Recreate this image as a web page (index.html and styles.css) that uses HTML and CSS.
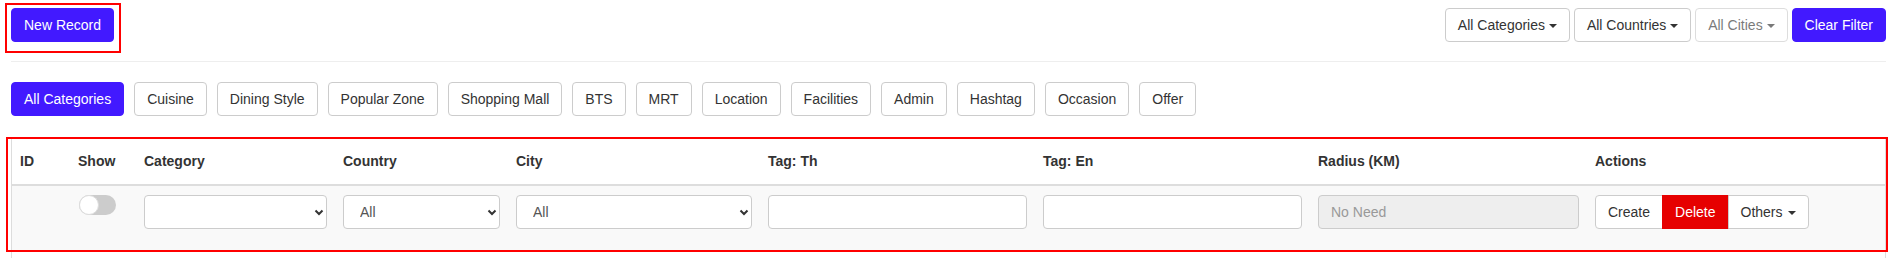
FILE: index.html
```html
<!DOCTYPE html>
<html lang="en">
<head>
  <meta charset="UTF-8">
  <meta name="viewport" content="width=device-width, initial-scale=1.0">
  <title>Tags</title>
  <link rel="stylesheet" href="styles.css">
</head>
<body>
  <div class="page">
    <div class="toolbar">
      <div class="marked">
        <button class="btn btn-primary">New Record</button>
        <div class="mark mark-new"></div>
      </div>

      <div class="filters">
        <button class="btn btn-default">All Categories <span class="caret"></span></button>
        <button class="btn btn-default">All Countries <span class="caret"></span></button>
        <button class="btn btn-default" disabled>All Cities <span class="caret"></span></button>
        <button class="btn btn-primary">Clear Filter</button>
      </div>
    </div>

    <hr class="divider">

    <div class="pills">
      <button class="btn btn-primary">All Categories</button>
      <button class="btn btn-default">Cuisine</button>
      <button class="btn btn-default">Dining Style</button>
      <button class="btn btn-default">Popular Zone</button>
      <button class="btn btn-default">Shopping Mall</button>
      <button class="btn btn-default">BTS</button>
      <button class="btn btn-default">MRT</button>
      <button class="btn btn-default">Location</button>
      <button class="btn btn-default">Facilities</button>
      <button class="btn btn-default">Admin</button>
      <button class="btn btn-default">Hashtag</button>
      <button class="btn btn-default">Occasion</button>
      <button class="btn btn-default">Offer</button>
    </div>

    <div class="table-wrap">
      <table class="table">
        <colgroup>
          <col class="col-id">
          <col class="col-show">
          <col class="col-category">
          <col class="col-country">
          <col class="col-city">
          <col class="col-tag">
          <col class="col-tag">
          <col class="col-radius">
          <col>
        </colgroup>
        <thead>
          <tr>
            <th>ID</th>
            <th>Show</th>
            <th>Category</th>
            <th>Country</th>
            <th>City</th>
            <th>Tag: Th</th>
            <th>Tag: En</th>
            <th>Radius (KM)</th>
            <th>Actions</th>
          </tr>
        </thead>
        <tbody>
          <tr>
            <td></td>
            <td>
              <span class="switch"><span class="knob"></span></span>
            </td>
            <td>
              <div class="select-wrap">
                <select class="form-control"><option></option></select>
                <svg class="chevron" width="10" height="7" viewBox="0 0 10 7"><path d="M1.5 1.5 L5 5 L8.5 1.5" fill="none" stroke="#333" stroke-width="2"/></svg>
              </div>
            </td>
            <td>
              <div class="select-wrap">
                <select class="form-control"><option>All</option></select>
                <svg class="chevron" width="10" height="7" viewBox="0 0 10 7"><path d="M1.5 1.5 L5 5 L8.5 1.5" fill="none" stroke="#333" stroke-width="2"/></svg>
              </div>
            </td>
            <td>
              <div class="select-wrap">
                <select class="form-control"><option>All</option></select>
                <svg class="chevron" width="10" height="7" viewBox="0 0 10 7"><path d="M1.5 1.5 L5 5 L8.5 1.5" fill="none" stroke="#333" stroke-width="2"/></svg>
              </div>
            </td>
            <td><input class="form-control" type="text"></td>
            <td><input class="form-control" type="text"></td>
            <td><input class="form-control" type="text" placeholder="No Need" disabled></td>
            <td>
              <div class="btn-group">
                <button class="btn btn-default">Create</button>
                <button class="btn btn-danger">Delete</button>
                <button class="btn btn-default">Others <span class="caret"></span></button>
              </div>
            </td>
          </tr>
        </tbody>
      </table>
      <div class="mark mark-table"></div>
    </div>
  </div>
</body>
</html>
```

FILE: styles.css
```css
* {
  box-sizing: border-box;
}

body {
  margin: 0;
  font-family: "Liberation Sans", Arial, sans-serif;
  font-size: 14px;
  line-height: 20px;
  color: #333;
  background: #fff;
}

.page {
  padding: 8px 10px 0 11px;
}

.toolbar {
  display: flex;
  justify-content: space-between;
  align-items: flex-start;
}

.filters {
  display: flex;
  gap: 4px;
}

.btn {
  display: inline-block;
  padding: 6px 12px;
  font-family: inherit;
  font-size: 14px;
  line-height: 20px;
  border: 1px solid transparent;
  border-radius: 4px;
  white-space: nowrap;
  cursor: pointer;
}

.btn-default {
  background: #fff;
  border-color: #ccc;
  color: #333;
}

.btn-default:disabled {
  opacity: 0.65;
  cursor: not-allowed;
}

.btn-primary {
  background: #4219ff;
  border-color: #4219ff;
  color: #fff;
}

.btn-danger {
  background: #e60000;
  border-color: #e60000;
  color: #fff;
}

.caret {
  display: inline-block;
  width: 0;
  height: 0;
  vertical-align: middle;
  border-top: 4px solid;
  border-left: 4px solid transparent;
  border-right: 4px solid transparent;
}

/* red review boxes drawn over the content */
.marked {
  position: relative;
}

.mark {
  position: absolute;
  border: 2px solid #f00;
  pointer-events: none;
}

.mark-new {
  top: -5px;
  left: -6px;
  right: -7px;
  bottom: -11px;
}

.divider {
  margin: 19px 0 20px;
  border: 0;
  border-top: 1px solid #eee;
}

.pills {
  display: flex;
  gap: 10px;
}

.table-wrap {
  position: relative;
  margin-top: 23px;
  padding-bottom: 10px;
  border-left: 1px solid #ddd;
  border-right: 1px solid #ddd;
}

.mark-table {
  top: -2px;
  left: -6px;
  right: -3px;
  bottom: 8px;
}

.table {
  width: 100%;
  table-layout: fixed;
  border-collapse: collapse;
}

.col-id { width: 58px; }
.col-show { width: 66px; }
.col-category { width: 199px; }
.col-country { width: 173px; }
.col-city { width: 252px; }
.col-tag { width: 275px; }
.col-radius { width: 277px; }

.table th {
  text-align: left;
  font-weight: bold;
  padding: 12px 8px 13px;
  border-bottom: 2px solid #ddd;
}

.table td {
  background: #f9f9f9;
  padding: 9px 8px 21px;
  vertical-align: top;
}

.switch {
  position: relative;
  display: block;
  width: 37px;
  height: 20px;
  margin-left: 1px;
  border-radius: 10px;
  background: #ccc;
}

.knob {
  position: absolute;
  top: 0;
  left: 0;
  width: 20px;
  height: 20px;
  border-radius: 50%;
  background: #fff;
  border: 1px solid #ddd;
}

.form-control {
  display: block;
  width: 100%;
  height: 34px;
  padding: 6px 12px;
  font-family: inherit;
  font-size: 14px;
  line-height: 20px;
  color: #555;
  background: #fff;
  border: 1px solid #ccc;
  border-radius: 4px;
}

.form-control:disabled {
  background: #eee;
}

.form-control::placeholder {
  color: #999;
}

.select-wrap {
  position: relative;
}

.select-wrap select {
  -webkit-appearance: none;
  appearance: none;
  padding-left: 16px;
}

.chevron {
  position: absolute;
  right: 3px;
  top: 14px;
}

.btn-group {
  display: flex;
}

.btn-group .btn {
  border-radius: 0;
}

.btn-group .btn + .btn {
  margin-left: -1px;
}

.btn-group .btn:first-child {
  border-radius: 4px 0 0 4px;
}

.btn-group .btn:last-child {
  border-radius: 0 4px 4px 0;
}

.btn-group .caret {
  margin-left: 2px;
}
```
